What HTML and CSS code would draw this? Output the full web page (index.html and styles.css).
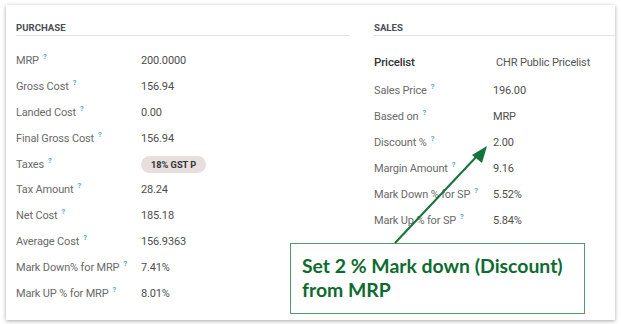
FILE: index.html
```html
<!DOCTYPE html>
<html>
<head>
<meta charset="utf-8">
<link rel="stylesheet" href="styles.css">
</head>
<body>
<div class="card">
  <section class="col purchase">
    <h3 class="sec-title">PURCHASE</h3>
    <div class="rows">
      <div class="row"><span class="lbl">MRP<sup class="q">?</sup></span><span class="val">200.0000</span></div>
      <div class="row"><span class="lbl">Gross Cost<sup class="q">?</sup></span><span class="val">156.94</span></div>
      <div class="row"><span class="lbl">Landed Cost<sup class="q">?</sup></span><span class="val">0.00</span></div>
      <div class="row"><span class="lbl">Final Gross Cost<sup class="q">?</sup></span><span class="val">156.94</span></div>
      <div class="row"><span class="lbl">Taxes<sup class="q">?</sup></span><span class="val"><span class="tag">18% GST P</span></span></div>
      <div class="row"><span class="lbl">Tax Amount<sup class="q">?</sup></span><span class="val">28.24</span></div>
      <div class="row"><span class="lbl">Net Cost<sup class="q">?</sup></span><span class="val">185.18</span></div>
      <div class="row"><span class="lbl">Average Cost<sup class="q">?</sup></span><span class="val">156.9363</span></div>
      <div class="row"><span class="lbl">Mark Down% for MRP<sup class="q">?</sup></span><span class="val">7.41%</span></div>
      <div class="row"><span class="lbl">Mark UP % for MRP<sup class="q">?</sup></span><span class="val">8.01%</span></div>
    </div>
  </section>
  <section class="col sales">
    <h3 class="sec-title">SALES</h3>
    <div class="rows">
      <div class="row row-main"><span class="lbl strong">Pricelist</span><span class="val sel">CHR Public Pricelist</span></div>
      <div class="row"><span class="lbl">Sales Price<sup class="q">?</sup></span><span class="val">196.00</span></div>
      <div class="row"><span class="lbl">Based on<sup class="q">?</sup></span><span class="val">MRP</span></div>
      <div class="row"><span class="lbl">Discount %<sup class="q">?</sup></span><span class="val">2.00</span></div>
      <div class="row"><span class="lbl">Margin Amount<sup class="q">?</sup></span><span class="val">9.16</span></div>
      <div class="row"><span class="lbl">Mark Down % for SP<sup class="q">?</sup></span><span class="val">5.52%</span></div>
      <div class="row"><span class="lbl">Mark Up % for SP<sup class="q">?</sup></span><span class="val">5.84%</span></div>
    </div>
  </section>
</div>
<div class="callout">Set 2 % Mark down (Discount) from MRP</div>
<svg class="arrow" width="621" height="324" viewBox="0 0 621 324">
  <line x1="395" y1="243" x2="478" y2="155" stroke="#16733a" stroke-width="2"/>
  <polygon points="487,146 472,155 482,163" fill="#16733a"/>
</svg>
</body>
</html>
```

FILE: styles.css
```css
html, body {
  margin: 0;
  padding: 0;
  background: #ffffff;
}
body {
  width: 621px;
  height: 324px;
  position: relative;
  overflow: hidden;
  font-family: Roboto, "Liberation Sans", Arial, sans-serif;
}
.card {
  margin: 5px 0 0 6px;
  width: 609px;
  height: 315px;
  box-sizing: border-box;
  background: #fff;
  box-shadow: 0 1px 4px rgba(0,0,0,0.35);
  padding: 17px 0 0 10px;
  display: grid;
  grid-template-columns: 334px 1fr;
  column-gap: 24px;
}
.sec-title {
  margin: 0;
  font-size: 9.6px;
  font-weight: 700;
  color: #4a4f55;
  line-height: 12px;
  padding-bottom: 1px;
  border-bottom: 1px solid #e2e2e2;
}
.rows {
  padding-top: 12px;
}
.sales .rows {
  padding-top: 11px;
}
.row {
  display: flex;
  align-items: center;
  height: 25.8px;
  font-size: 11px;
  letter-spacing: -0.15px;
  color: #4e4e4e;
}
.sales .row {
  height: 26px;
}
.lbl {
  color: #6a6a6a;
  white-space: nowrap;
}
.purchase .lbl { width: 125px; }
.sales .lbl { width: 119px; }
.lbl.strong {
  color: #333;
  font-weight: 500;
  font-size: 11.5px;
}
.sales .row-main {
  height: 30px;
}
.val.sel {
  padding-left: 3px;
  color: #555;
}
.q {
  color: #5aa9cf;
  font-size: 7.5px;
  margin-left: 4px;
  vertical-align: 5px;
  font-weight: 700;
  line-height: 0;
}
.val { color: #4e4e4e; }
.tag {
  display: inline-block;
  background: #e7dede;
  border-radius: 9px;
  padding: 0 10px;
  height: 17px;
  line-height: 17px;
  font-size: 9.2px;
  font-weight: 700;
  color: #333;
  letter-spacing: 0;
}
.callout {
  position: absolute;
  left: 290px;
  top: 243px;
  width: 295px;
  height: 71px;
  box-sizing: border-box;
  border: 1px solid #4e9a6b;
  background: #fff;
  padding: 10px 8px 0 11px;
  font-family: Lato, "Open Sans", sans-serif;
  font-weight: 700;
  font-size: 19.4px;
  line-height: 24px;
  color: #0e6b30;
}
.arrow {
  position: absolute;
  left: 0;
  top: 0;
  pointer-events: none;
}
```
